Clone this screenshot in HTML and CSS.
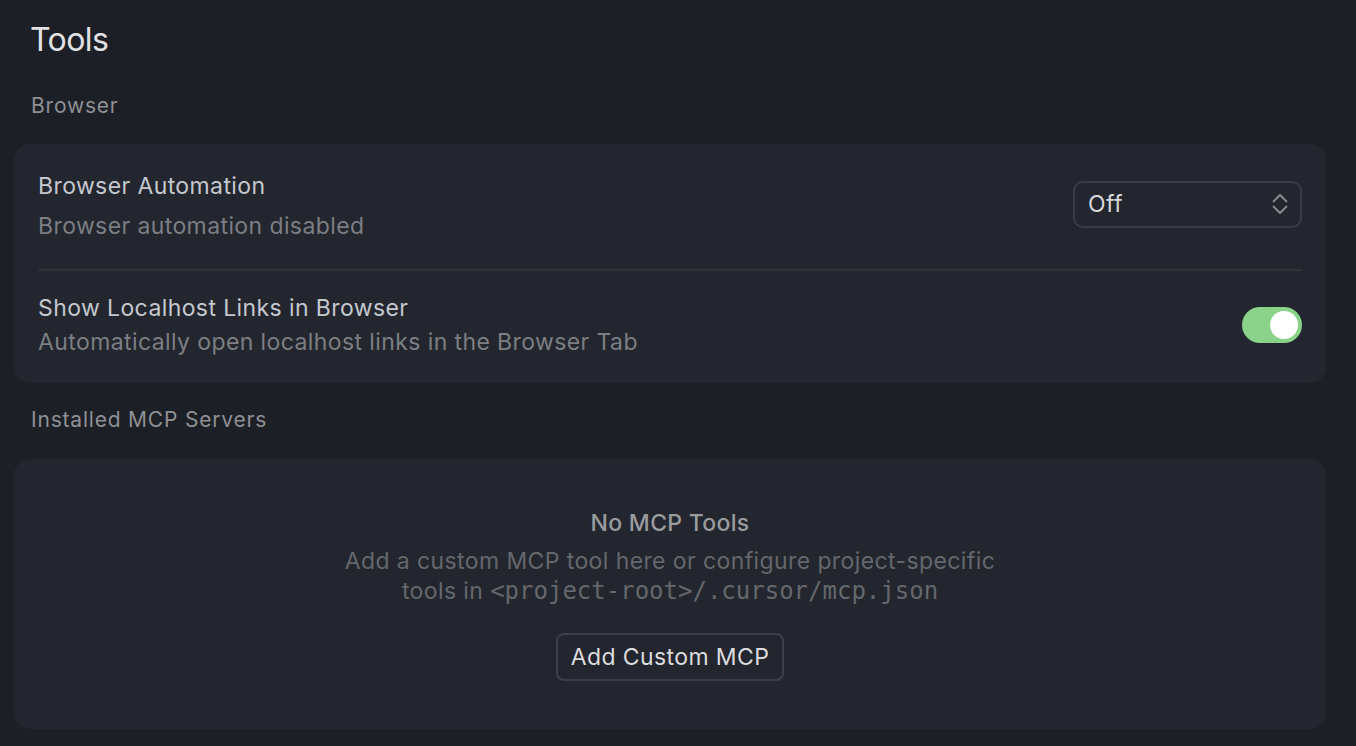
FILE: index.html
```html
<!DOCTYPE html>
<html>
<head>
    <meta charset="UTF-8">
    <title>Tools</title>
    <link rel="stylesheet" href="styles.css">
</head>
<body>
    <div class="page">
        <h1 class="page-title">Tools</h1>

        <h2 class="section-label">Browser</h2>
        <div class="card">
            <div class="row row-first">
                <div class="row-text">
                    <div class="row-title">Browser Automation</div>
                    <div class="row-desc desc-gap">Browser automation disabled</div>
                </div>
                <div class="select">
                    <span>Off</span>
                    <svg width="16" height="22" viewBox="0 0 16 22" fill="none" stroke="#8a8c92" stroke-width="1.8" stroke-linecap="round" stroke-linejoin="round">
                        <path d="M1.5 8.5 L8 2 L14.5 8.5"/>
                        <path d="M1.5 13.5 L8 20 L14.5 13.5"/>
                    </svg>
                </div>
            </div>
            <div class="divider"></div>
            <div class="row row-second">
                <div class="row-text">
                    <div class="row-title">Show Localhost Links in Browser</div>
                    <div class="row-desc">Automatically open localhost links in the Browser Tab</div>
                </div>
                <div class="toggle on"><div class="knob"></div></div>
            </div>
        </div>

        <h2 class="section-label label-mcp">Installed MCP Servers</h2>
        <div class="card empty">
            <div class="empty-title">No MCP Tools</div>
            <p class="empty-desc">Add a custom MCP tool here or configure project-specific<br>tools in <code>&lt;project-root&gt;/.cursor/mcp.json</code></p>
            <button class="btn">Add Custom MCP</button>
        </div>
    </div>
</body>
</html>
```

FILE: styles.css
```css
body {
    margin: 0;
    background-color: #1d1f26;
    font-family: Inter, "Noto Sans", sans-serif;
    color: #d6d6d8;
}
.page {
    padding: 20px 30px 0 14px;
}
.page-title {
    margin: 0 0 0 16px;
    font-size: 32px;
    font-weight: 400;
    line-height: 40px;
    letter-spacing: -0.6px;
    color: #e2e2e4;
}
.section-label {
    margin: 0 0 0 17px;
    padding-top: 32px;
    font-size: 21px;
    font-weight: 400;
    line-height: 28px;
    letter-spacing: 0.8px;
    color: #8f9095;
}
.label-mcp {
    padding-top: 23px;
}
.card {
    background-color: #23262e;
    border-radius: 16px;
    margin-top: 24px;
    padding: 0 24px;
}
.row {
    display: flex;
    align-items: center;
    justify-content: space-between;
}
.row-first {
    padding: 26px 0 27px;
}
.row-second {
    padding: 21px 0 25px;
}
.row-title {
    font-size: 23px;
    line-height: 32px;
    letter-spacing: 0.4px;
    color: #c5c8cf;
}
.row-desc {
    margin-top: 2px;
    font-size: 23px;
    line-height: 32px;
    letter-spacing: 0.4px;
    color: #7c7e84;
}
.desc-gap {
    margin-top: 8px;
}
.divider {
    height: 2px;
    background-color: #2f3239;
}
.select {
    width: 229px;
    height: 47px;
    margin-top: -4px;
    box-sizing: border-box;
    border: 2px solid #393c44;
    border-radius: 10px;
    display: flex;
    align-items: center;
    justify-content: space-between;
    padding: 0 12px 0 13px;
    font-size: 23px;
    letter-spacing: 0.4px;
    color: #d8d8da;
}
.toggle {
    width: 60px;
    height: 36px;
    border-radius: 18px;
    background-color: #3a3d45;
    position: relative;
}
.toggle.on {
    background-color: #8ad28a;
}
.knob {
    position: absolute;
    top: 4px;
    right: 4px;
    width: 28px;
    height: 28px;
    border-radius: 50%;
    background-color: #ffffff;
}
.empty {
    display: flex;
    flex-direction: column;
    align-items: center;
    padding: 48px 24px 48px;
    margin-top: 25px;
}
.empty-title {
    font-size: 23px;
    font-weight: 500;
    line-height: 32px;
    letter-spacing: 0.3px;
    color: #9a9b9f;
}
.empty-desc {
    margin: 7px 0 0;
    text-align: center;
    font-size: 23px;
    line-height: 30px;
    letter-spacing: 0.4px;
    color: #65676d;
}
.empty-desc code {
    font-family: "DejaVu Sans Mono", monospace;
    font-size: 24px;
    letter-spacing: 0;
}
.btn {
    margin-top: 27px;
    height: 48px;
    padding: 0 13px;
    background-color: #23262e;
    border: 2px solid #3d4048;
    border-radius: 8px;
    font-family: Inter, "Noto Sans", sans-serif;
    font-size: 23px;
    letter-spacing: 0.4px;
    color: #dcdcde;
}
```
